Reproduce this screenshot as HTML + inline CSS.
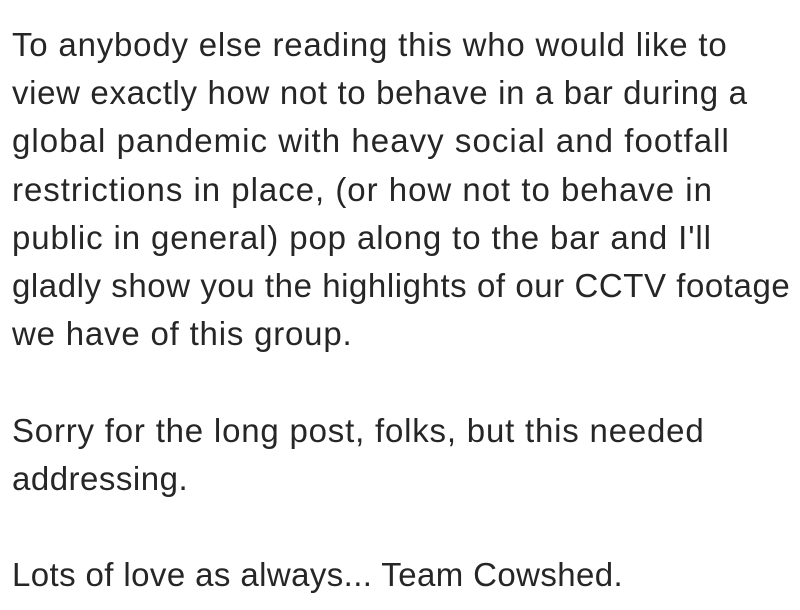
<!DOCTYPE html>
<html><head><meta charset="utf-8"><style>
html,body{margin:0;padding:0;background:#fff;width:800px;height:610px;overflow:hidden}
.t{position:absolute;left:12px;top:21px;font-family:"Liberation Sans",sans-serif;font-size:33px;line-height:48.2px;color:#262626;white-space:nowrap}
.t div{height:48.2px}
</style></head><body>
<div class="t">
<div style="letter-spacing:0.8px">To anybody else reading this who would like to</div>
<div style="letter-spacing:0.65px">view exactly how not to behave in a bar during a</div>
<div style="letter-spacing:1.05px">global pandemic with heavy social and footfall</div>
<div style="letter-spacing:0.98px">restrictions in place, (or how not to behave in</div>
<div style="letter-spacing:0.88px">public in general) pop along to the bar and I'll</div>
<div style="letter-spacing:0.56px">gladly show you the highlights of our CCTV footage</div>
<div style="letter-spacing:0.8px">we have of this group.</div>
<div>&nbsp;</div>
<div style="letter-spacing:0.8px">Sorry for the long post, folks, but this needed</div>
<div style="letter-spacing:0.5px">addressing.</div>
<div>&nbsp;</div>
<div style="letter-spacing:0.4px">Lots of love as always... Team Cowshed.</div>
</div>
</body></html>
